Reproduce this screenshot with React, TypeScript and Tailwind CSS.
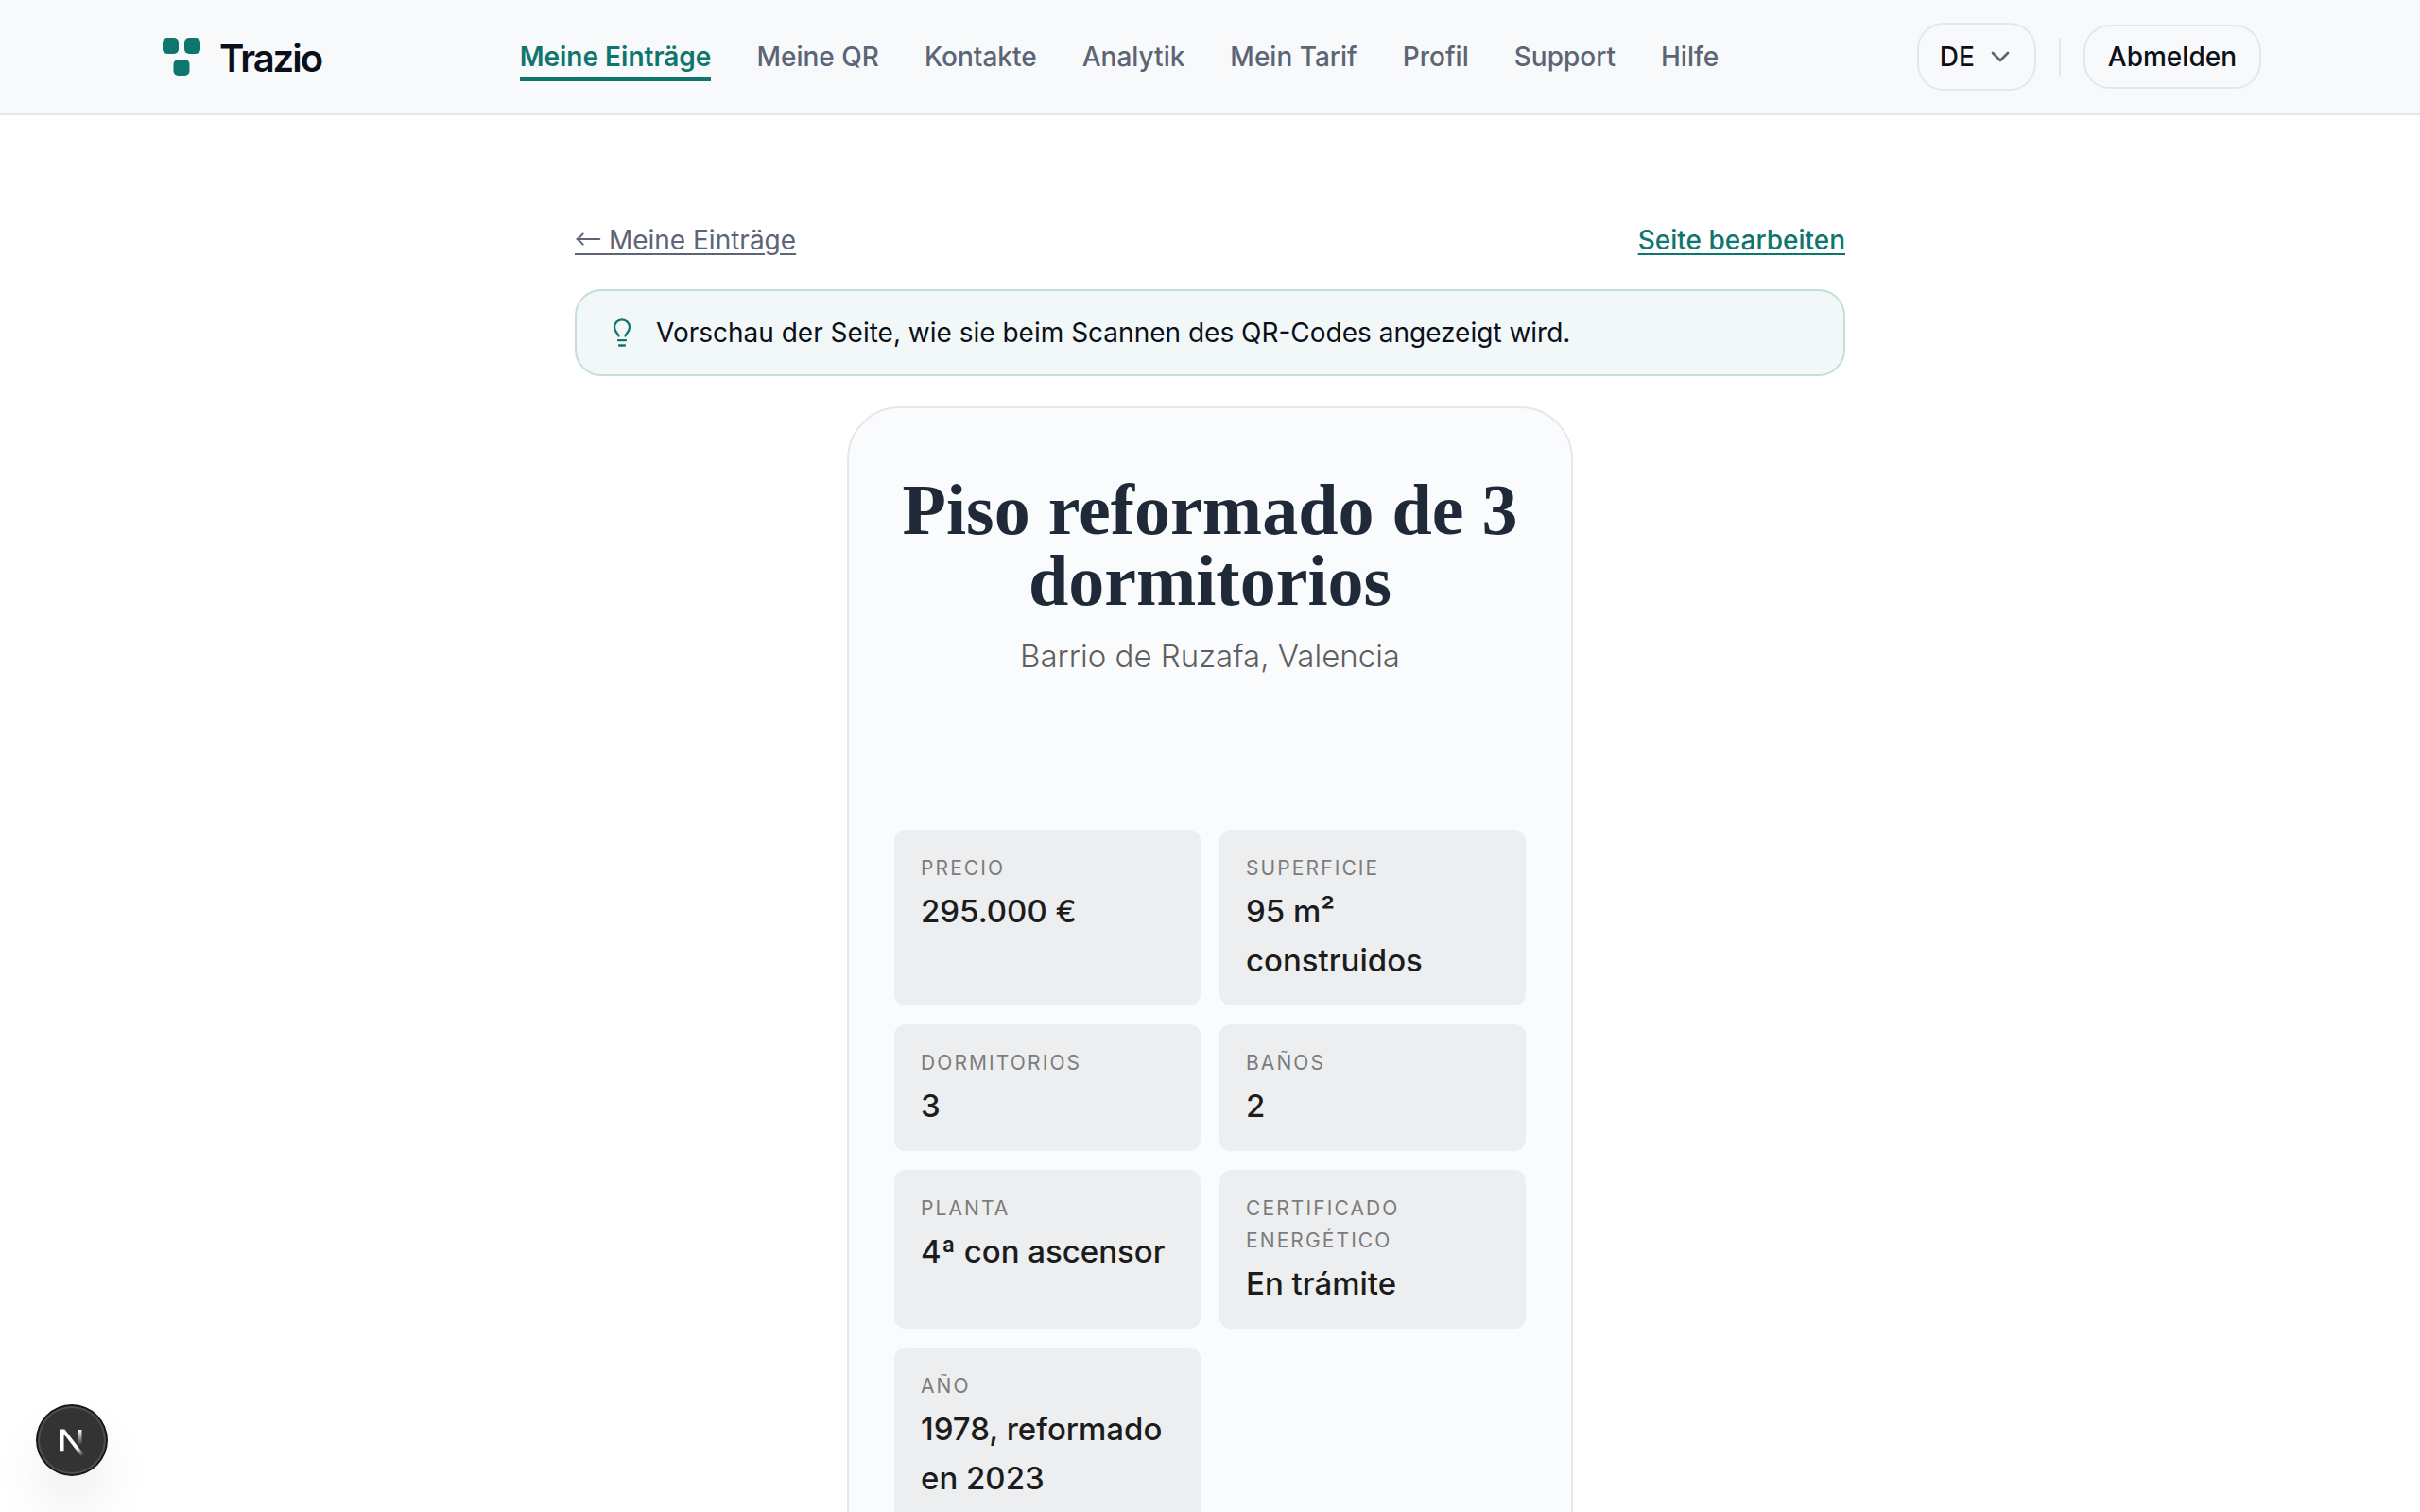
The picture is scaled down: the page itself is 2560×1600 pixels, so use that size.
import React from "react";
import { ChevronDown } from "lucide-react";

interface Fact {
  label: string;
  value: string;
}

const NAV_ITEMS = [
  "Meine Einträge",
  "Meine QR",
  "Kontakte",
  "Analytik",
  "Mein Tarif",
  "Profil",
  "Support",
  "Hilfe",
];

const FACTS: Fact[] = [
  { label: "Precio", value: "295.000 €" },
  { label: "Superficie", value: "95 m² construidos" },
  { label: "Dormitorios", value: "3" },
  { label: "Baños", value: "2" },
  { label: "Planta", value: "4ª con ascensor" },
  { label: "Certificado energético", value: "En trámite" },
  { label: "Año", value: "1978, reformado en 2023" },
];

const Logo = () => (
  <a href="#" className="flex items-center gap-4">
    <svg className="size-12 fill-[#0f766e]" viewBox="0 0 48 48" aria-hidden="true">
      <rect x="4" y="4" width="17" height="17" rx="5" />
      <rect x="27" y="4" width="17" height="17" rx="5" />
      <rect x="15.5" y="27" width="17" height="17" rx="5" />
    </svg>
    <span className="pt-1 text-[40px] leading-12 font-semibold tracking-tighter">Trazio</span>
  </a>
);

const Header = () => (
  <header className="border-b-2 border-[#e5e7eb] bg-[#f8f9fb]">
    <div className="mx-auto flex h-30 max-w-[2304px] items-center justify-between px-10">
      <Logo />

      <nav className="flex items-center gap-12 text-[28px] leading-10 font-medium text-[#5b6576]">
        {NAV_ITEMS.map((item, i) => (
          <a
            key={item}
            href="#"
            className={
              i === 0
                ? "border-y-4 border-t-transparent border-b-[#0f766e] py-0.5 font-semibold text-[#0f766e]"
                : "border-y-4 border-transparent py-0.5"
            }
          >
            {item}
          </a>
        ))}
      </nav>

      <div className="flex items-center gap-6 text-[28px] leading-10 font-medium">
        <div className="flex h-18 items-center gap-2 rounded-[28px] border-2 border-[#e5e7eb] pr-5 pl-[22px]">
          <select aria-label="Sprache" className="w-10 appearance-none bg-transparent outline-none">
            <option>DE</option>
            <option>EN</option>
            <option>ES</option>
          </select>
          <ChevronDown className="pointer-events-none size-8 text-[#5b6576]" />
        </div>
        <span className="h-10 w-0.5 bg-[#e5e7eb]" />
        <button
          type="button"
          className="cursor-pointer rounded-[28px] border-2 border-[#e5e7eb] px-6 py-3"
        >
          Abmelden
        </button>
      </div>
    </div>
  </header>
);

const Hint = () => (
  <div className="flex items-center gap-5 rounded-[28px] border-2 border-[#c5dedb] bg-[#f2f8f8] px-8 py-6">
    <svg
      className="size-8 shrink-0 stroke-[#0f766e]"
      viewBox="0 0 32 32"
      fill="none"
      strokeWidth="2.3"
      strokeLinecap="round"
      strokeLinejoin="round"
      aria-hidden="true"
    >
      <path d="M12.500 19.500C11.800 16.700 8 15 8 10.300a8 8 0 0 1 16 0c0 4.700-3.800 6.400-4.500 9.200" />
      <path d="M12 24.200h8" />
      <path d="M13 29.500h6" />
    </svg>
    <p>Vorschau der Seite, wie sie beim Scannen des QR-Codes angezeigt wird.</p>
  </div>
);

const FactCard: React.FC<Fact> = ({ label, value }) => (
  <div className="rounded-xl bg-[#edeef0] px-7 pt-6 pb-[22px]">
    <dt className="mb-0.5 text-[21px] leading-[34px] tracking-widest text-[#7c7c7c] uppercase">
      {label}
    </dt>
    <dd className="text-[33px] leading-[52px] font-medium text-[#1c1c1c]">{value}</dd>
  </div>
);

const ListingPreview = () => (
  <article className="mx-auto w-full max-w-3xl rounded-[56px] border-2 border-[#e5e7eb] bg-[#fafbfd] px-12 pt-[70px] pb-12">
    <h1 className="text-center font-['Liberation_Serif',serif] text-[76px] leading-[75px] font-bold text-[#1f2937]">
      Piso reformado de 3 dormitorios
    </h1>
    <p className="mt-4 text-center text-[33px] leading-[52px] font-light text-[#5f5f5f]">
      Barrio de Ruzafa, Valencia
    </p>
    <dl className="mt-[158px] grid grid-cols-2 gap-5">
      {FACTS.map((fact) => (
        <FactCard key={fact.label} {...fact} />
      ))}
    </dl>
  </article>
);

const DevBadge = () => (
  <button
    type="button"
    aria-label="Next.js"
    className="fixed bottom-10 left-10 flex size-18 cursor-pointer items-center justify-center rounded-full bg-[#333333] shadow-[0_0_0_2px_#171717,inset_0_0_0_2px_rgba(255,255,255,0.14),0_32px_64px_-16px_rgba(0,0,0,0.24)]"
  >
    <svg className="size-20 shrink-0" viewBox="0 0 40 40" fill="none" aria-hidden="true">
      <defs>
        <linearGradient id="diagonal" gradientUnits="userSpaceOnUse" x1="9.956" y1="11.123" x2="15.478" y2="17.967">
          <stop stopColor="white" />
          <stop offset="0.604" stopColor="white" stopOpacity="0" />
          <stop offset="1" stopColor="white" stopOpacity="0" />
        </linearGradient>
        <linearGradient id="stem" gradientUnits="userSpaceOnUse" x1="11.822" y1="1.4" x2="11.792" y2="9.625">
          <stop stopColor="white" />
          <stop offset="1" stopColor="white" stopOpacity="0" />
        </linearGradient>
        <clipPath id="top">
          <rect y="1.300" width="18" height="18" />
        </clipPath>
      </defs>
      <g transform="translate(12.5 13)" strokeWidth="1.86" clipPath="url(#top)">
        <path d="M13.3 15.2L2.34 1V12.600" stroke="url(#diagonal)" />
        <path d="M11.825 1.5V13.100" stroke="url(#stem)" />
      </g>
    </svg>
  </button>
);

export default function App() {
  return (
    <div className="min-h-screen bg-white font-[Inter,sans-serif] text-[#0b0f19]">
      <Header />
      <main className="mx-auto flex max-w-[1344px] flex-col gap-8 pt-28 pb-28 text-[28px] leading-10">
        <div className="flex items-center justify-between">
          <a href="#" className="text-[#5b6576] underline underline-offset-4">
            <span className="font-['Noto_Sans_CJK_JP',sans-serif] leading-none">←</span> Meine Einträge
          </a>
          <a href="#" className="font-medium text-[#0f766e] underline underline-offset-4">
            Seite bearbeiten
          </a>
        </div>
        <Hint />
        <ListingPreview />
      </main>
      <DevBadge />
    </div>
  );
}
